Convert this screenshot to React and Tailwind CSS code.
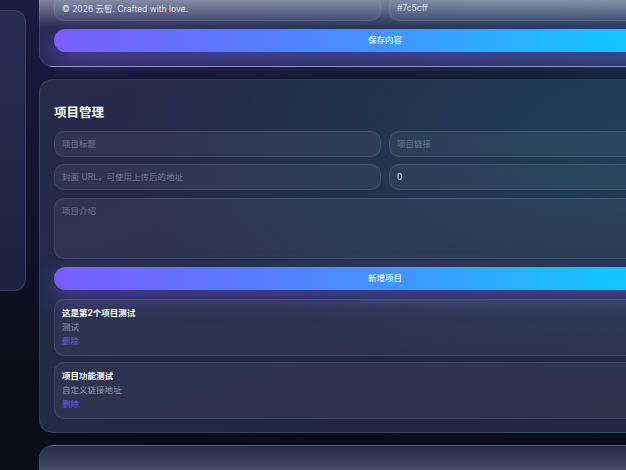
import React from "react";

const inputCls =
  "h-[26px] w-full rounded-[10px] border border-white/10 bg-white/[0.05] px-[7px] text-[8.5px] text-[#dfe3ee] placeholder:text-[#727892] outline-none";

const btnCls =
  "mt-[8px] h-[23px] w-full rounded-full bg-[linear-gradient(90deg,#7b5cff_0%,#4c88ff_42%,#16c2ff_82%,#12c8ff_100%)] text-[8.5px] text-white shadow-[0_8px_22px_rgba(124,92,255,0.45)]";

const projects = [
  { title: "这是第2个项目测试", desc: "测试" },
  { title: "项目功能测试", desc: "自定义链接地址" },
];

export default function App() {
  return (
    <div
      className="relative h-[470px] w-[626px] overflow-hidden bg-[#0b0e1a] bg-[radial-gradient(ellipse_at_0%_0%,#1c1a44_0%,rgba(28,26,68,0)_55%),radial-gradient(ellipse_at_100%_10%,#11243a_0%,rgba(17,36,58,0)_55%)]"
      style={{ fontFamily: 'Inter, "Noto Sans CJK SC", sans-serif' }}
    >
      <div className="flex w-[760px] items-start gap-[13px]">
        {/* sidebar */}
        <aside className="-ml-[174px] mt-[10px] h-[281px] w-[200px] shrink-0 rounded-[12px] border border-white/10 bg-[linear-gradient(180deg,#2a2a56_0%,#222647_60%,#1e2240_100%)]" />

        <main className="-mt-[21px] flex w-[692px] shrink-0 flex-col gap-[12px]">
          {/* site settings card (tail) */}
          <section className="rounded-[14px] border border-white/10 bg-[linear-gradient(180deg,rgba(205,215,228,0.6)_0px,rgba(205,215,228,0.5)_21px,rgba(205,215,228,0)_47px),linear-gradient(100deg,#2a2a55_0%,#233558_60%,#1f3a58_100%)] px-[14px] pt-[15px] pb-[14px]">
            <div className="grid grid-cols-2 gap-x-[8px]">
              <input className={inputCls} defaultValue="© 2026 云智. Crafted with love." />
              <input className={inputCls} defaultValue="#7c5cff" />
            </div>
            <button className={btnCls}>保存内容</button>
          </section>

          {/* project management */}
          <section className="rounded-[14px] border border-white/10 bg-[radial-gradient(ellipse_at_85%_15%,rgba(30,75,105,0.6)_0%,rgba(30,75,105,0)_60%),linear-gradient(160deg,#262948_0%,#222a47_50%,#22263f_100%)] px-[14px] pt-[24px] pb-[13px]">
            <h2 className="mb-[9px] text-[12.5px] leading-[18px] font-bold text-white">项目管理</h2>
            <div className="grid grid-cols-2 gap-x-[8px] gap-y-[7px]">
              <input className={inputCls} placeholder="项目标题" />
              <input className={inputCls} placeholder="项目链接" />
              <input className={inputCls} placeholder="封面 URL，可使用上传后的地址" />
              <input className={inputCls} defaultValue="0" />
            </div>
            <textarea
              className="mt-[8px] block h-[61px] w-full resize-none rounded-[10px] border border-white/10 bg-white/[0.05] px-[7px] py-[6px] text-[8.5px] text-[#dfe3ee] placeholder:text-[#727892] outline-none"
              placeholder="项目介绍"
            />
            <button className={btnCls}>新增项目</button>
            <div className="mt-[9px] flex flex-col gap-[6px]">
              {projects.map((p) => (
                <div
                  key={p.title}
                  className="h-[57px] rounded-[10px] border border-white/10 bg-white/[0.05] px-[7px] pt-[6px] text-[8.5px] leading-[14px]"
                >
                  <div className="font-bold text-white">{p.title}</div>
                  <div className="text-[#959aae]">{p.desc}</div>
                  <div className="text-[#7259e6]">删除</div>
                </div>
              ))}
            </div>
          </section>

          {/* next card */}
          <section className="h-[200px] rounded-[14px] border border-white/10 bg-[linear-gradient(180deg,rgba(190,195,215,0)_0px,rgba(190,195,215,0.25)_28px,rgba(190,195,215,0.25)_200px),linear-gradient(160deg,#262948_0%,#232a45_100%)]" />
        </main>
      </div>
    </div>
  );
}
